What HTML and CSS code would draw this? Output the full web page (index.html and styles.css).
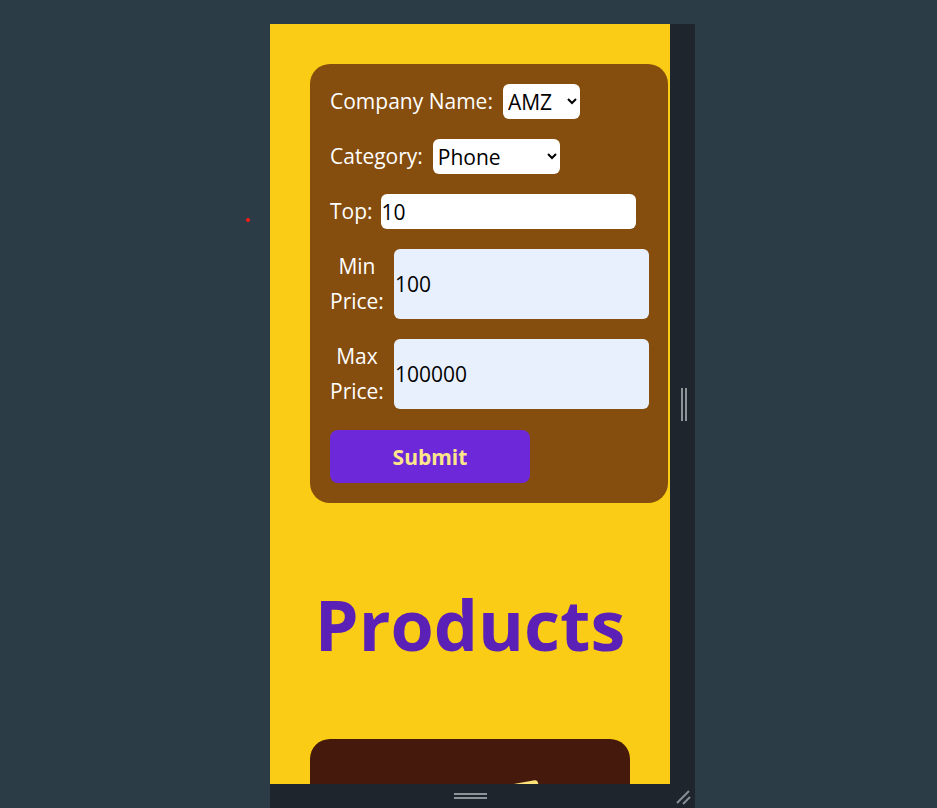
FILE: index.html
```html
<!DOCTYPE html>
<html>
<head>
<meta charset="utf-8">
<link rel="stylesheet" href="styles.css">
</head>
<body>
<span class="dot"></span>
<div class="device">
  <div class="top-row">
    <div class="viewport">
      <form class="filter-card">
        <div class="row">
          <label class="lbl">Company Name:</label>
          <select class="sel sel-company"><option>AMZ</option></select>
        </div>
        <div class="row">
          <label class="lbl">Category:</label>
          <select class="sel sel-category"><option>Phone</option></select>
        </div>
        <div class="row row-tight">
          <label class="lbl">Top:</label>
          <input class="inp" type="text" value="10">
        </div>
        <div class="row">
          <label class="lbl lbl-wrap">Min Price:</label>
          <input class="inp inp-auto" type="text" value="100">
        </div>
        <div class="row">
          <label class="lbl lbl-wrap">Max Price:</label>
          <input class="inp inp-auto" type="text" value="100000">
        </div>
        <button class="submit" type="button">Submit</button>
      </form>
      <h1 class="heading">Products</h1>
      <div class="product-card">
        <span class="product-shape"></span>
      </div>
    </div>
    <div class="side-strip">
      <span class="vgrip"></span>
    </div>
  </div>
  <div class="bottom-strip">
    <span class="hgrip"></span>
    <svg class="corner" width="16" height="16" viewBox="0 0 16 16">
      <line x1="2" y1="14" x2="14" y2="2" stroke="#8a8f93" stroke-width="2"/>
      <line x1="8" y1="15" x2="15" y2="8" stroke="#8a8f93" stroke-width="2"/>
    </svg>
  </div>
</div>
</body>
</html>
```

FILE: styles.css
```css
* { box-sizing: border-box; }
html, body { margin: 0; padding: 0; }
body {
  background: #2b3c46;
  width: 937px;
  height: 808px;
  overflow: hidden;
  font-family: "Open Sans", "Noto Sans", sans-serif;
  position: relative;
}
.dot {
  position: absolute;
  left: 246px;
  top: 218px;
  width: 4px;
  height: 4px;
  border-radius: 50%;
  background: #ff1a1a;
}
.device {
  margin-left: 270px;
  padding-top: 24px;
  width: 425px;
  display: flex;
  flex-direction: column;
}
.top-row {
  display: flex;
  height: 760px;
}
.viewport {
  width: 400px;
  height: 760px;
  background: #facc15;
  overflow: hidden;
  padding: 40px 0 0 40px;
}
.side-strip {
  width: 25px;
  background: #1e252c;
  display: flex;
  align-items: center;
  justify-content: center;
  padding-left: 2px;
}
.vgrip {
  width: 6px;
  height: 33px;
  border-left: 2px solid #8f9498;
  border-right: 2px solid #8f9498;
}
.bottom-strip {
  height: 24px;
  background: #1e252c;
  display: flex;
  align-items: center;
  justify-content: center;
  position: relative;
}
.hgrip {
  width: 33px;
  height: 6px;
  border-top: 2px solid #8f9498;
  border-bottom: 2px solid #8f9498;
  margin-left: -25px;
}
.corner {
  position: absolute;
  right: 4px;
  bottom: 3px;
}
.filter-card {
  width: 358px;
  background: #854d0e;
  border-radius: 20px;
  padding: 20px;
  display: flex;
  flex-direction: column;
  gap: 20px;
  color: #ffffff;
  font-size: 21px;
}
.row {
  display: flex;
  gap: 10px;
  line-height: 35px;
}
.row-tight { gap: 8px; }
.lbl {
  flex: 0 1 auto;
  text-align: center;
  white-space: normal;
}
.lbl-wrap { flex: 0 0 53px; }
.sel {
  font-family: inherit;
  font-size: 21px;
  height: 35px;
  border: none;
  border-radius: 6px;
  background: #ffffff;
  color: #000;
  padding: 0 1px;
}
.sel-company { width: 77px; }
.sel-category { width: 127px; }
.inp {
  font-family: inherit;
  font-size: 21px;
  width: 255px;
  flex: 0 0 255px;
  min-height: 35px;
  border: none;
  border-radius: 6px;
  background: #ffffff;
  color: #000;
  padding: 0 1px;
  outline: none;
}
.inp-auto { background: #e8f0fe; }
.submit {
  width: 200px;
  height: 53px;
  margin-top: 1px;
  border: none;
  border-radius: 8px;
  background: #6d28d9;
  color: #fde68a;
  font-family: inherit;
  font-size: 21px;
  font-weight: 700;
}
.heading {
  margin: 0;
  padding: 71px 0 0 0;
  width: 320px;
  text-align: center;
  color: #5b21b6;
  font-size: 70px;
  line-height: 100px;
  font-weight: 700;
}
.product-card {
  margin-top: 65px;
  width: 320px;
  height: 300px;
  background: #451a0c;
  border-radius: 20px;
  position: relative;
}
.product-shape {
  position: absolute;
  left: 198px;
  top: 46px;
  width: 30px;
  height: 40px;
  background: #fde27a;
  border-top-right-radius: 3px;
  transform-origin: top left;
  transform: rotate(-10deg);
}
```
